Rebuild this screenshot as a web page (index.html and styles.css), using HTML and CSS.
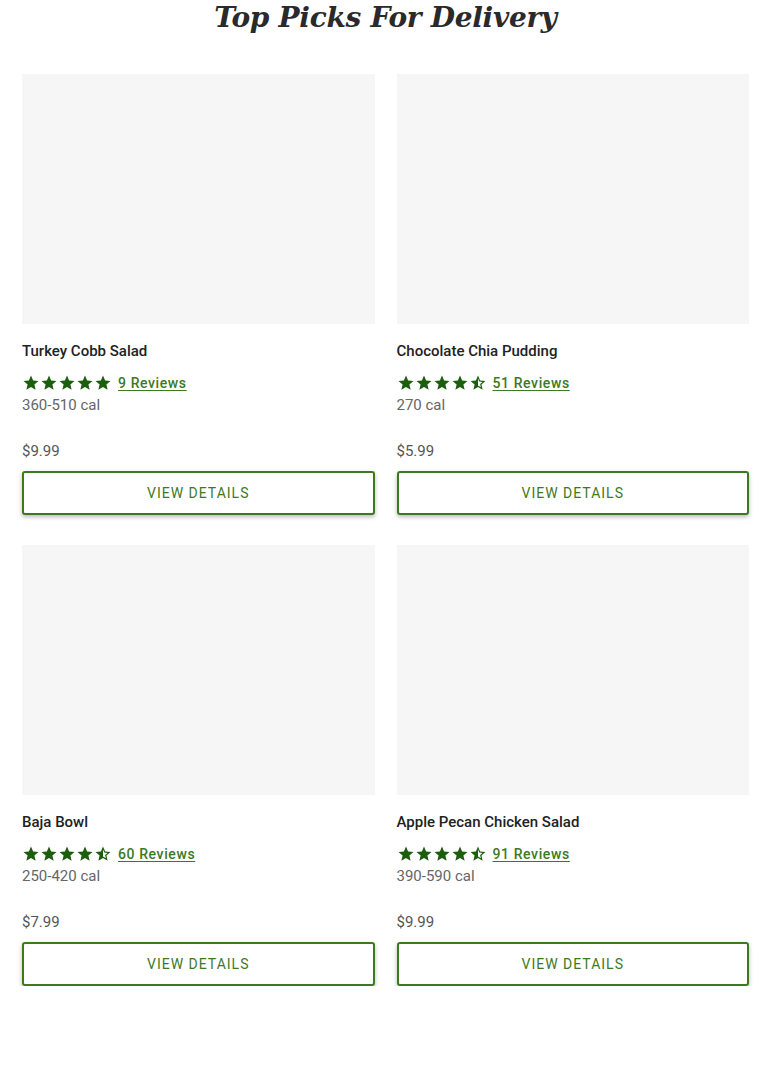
FILE: index.html
```html
<!DOCTYPE html>
<html>
<head>
<meta charset="utf-8">
<link rel="stylesheet" href="styles.css">
</head>
<body>
<svg width="0" height="0" class="defs">
  <defs>
    <symbol id="star" viewBox="0 0 24 24"><path d="M12 17.27L18.18 21l-1.64-7.03L22 9.24l-7.19-.61L12 2 9.19 8.63 2 9.24l5.46 4.73L5.82 21z"/></symbol>
    <symbol id="half" viewBox="0 0 24 24"><path d="M22 9.24l-7.19-.62L12 2 9.19 8.63 2 9.24l5.46 4.73L5.82 21 12 17.27 18.18 21l-1.63-7.03L22 9.24zM12 15.4V6.1l1.71 4.04 4.38.38-3.32 2.88 1 4.28L12 15.4z"/></symbol>
  </defs>
</svg>
<main class="page">
  <h2 class="heading">Top Picks For Delivery</h2>
  <div class="grid">
    <div class="card">
      <div class="img"></div>
      <div class="title">Turkey Cobb Salad</div>
      <div class="rating">
        <span class="stars"><svg><use href="#star"/></svg><svg><use href="#star"/></svg><svg><use href="#star"/></svg><svg><use href="#star"/></svg><svg><use href="#star"/></svg></span>
        <a class="reviews">9 Reviews</a>
      </div>
      <div class="cal">360-510 cal</div>
      <div class="price">$9.99</div>
      <button class="btn">VIEW DETAILS</button>
    </div>
    <div class="card">
      <div class="img"></div>
      <div class="title">Chocolate Chia Pudding</div>
      <div class="rating">
        <span class="stars"><svg><use href="#star"/></svg><svg><use href="#star"/></svg><svg><use href="#star"/></svg><svg><use href="#star"/></svg><svg><use href="#half"/></svg></span>
        <a class="reviews">51 Reviews</a>
      </div>
      <div class="cal">270 cal</div>
      <div class="price">$5.99</div>
      <button class="btn">VIEW DETAILS</button>
    </div>
    <div class="card">
      <div class="img"></div>
      <div class="title">Baja Bowl</div>
      <div class="rating">
        <span class="stars"><svg><use href="#star"/></svg><svg><use href="#star"/></svg><svg><use href="#star"/></svg><svg><use href="#star"/></svg><svg><use href="#half"/></svg></span>
        <a class="reviews">60 Reviews</a>
      </div>
      <div class="cal">250-420 cal</div>
      <div class="price">$7.99</div>
      <button class="btn">VIEW DETAILS</button>
    </div>
    <div class="card">
      <div class="img"></div>
      <div class="title">Apple Pecan Chicken Salad</div>
      <div class="rating">
        <span class="stars"><svg><use href="#star"/></svg><svg><use href="#star"/></svg><svg><use href="#star"/></svg><svg><use href="#star"/></svg><svg><use href="#half"/></svg></span>
        <a class="reviews">91 Reviews</a>
      </div>
      <div class="cal">390-590 cal</div>
      <div class="price">$9.99</div>
      <button class="btn">VIEW DETAILS</button>
    </div>
  </div>
</main>
</body>
</html>
```
FILE: styles.css
```css
html, body { margin: 0; padding: 0; background: #fff; }
body { font-family: Roboto, "Liberation Sans", Arial, sans-serif; color: #222; }
.defs { position: absolute; width: 0; height: 0; }
.page { padding: 0 22px 0 22px; }
.heading {
  margin: 0;
  height: 74px;
  line-height: 36px;
  text-align: center;
  font-family: "DejaVu Serif", "Liberation Serif", serif;
  font-style: italic;
  font-weight: bold;
  font-size: 28px;
  letter-spacing: -0.3px;
  color: #2a2a2a;
}
.grid {
  display: grid;
  grid-template-columns: 1fr 1fr;
  column-gap: 22px;
  row-gap: 30px;
}
.card { display: flex; flex-direction: column; }
.img { height: 250px; background: #f6f6f6; }
.title { margin-top: 17px; font-size: 15px; line-height: 20px; font-weight: 500; color: #222; }
.rating { margin-top: 11px; height: 22px; display: flex; align-items: center; gap: 6px; }
.stars { display: flex; }
.stars svg { width: 18px; height: 18px; fill: #1c5e0e; display: block; }
.reviews {
  font-size: 14px; font-weight: 500; letter-spacing: 0.6px;
  color: #3b7a1f; text-decoration: underline; text-underline-offset: 2px;
}
.cal { font-size: 15px; line-height: 20px; color: #666; margin-top: 1px; }
.price { font-size: 15px; line-height: 20px; color: #555; margin-top: 26px; }
.btn {
  margin-top: 10px; height: 44px; width: 100%;
  background: #fff; border: 2px solid #3d7a1f; border-radius: 3px;
  box-shadow: 0 2px 4px rgba(0,0,0,0.28);
  font-family: Roboto, "Liberation Sans", Arial, sans-serif;
  font-size: 14px; letter-spacing: 1px; color: #3d7a1f; font-weight: 400;
  padding: 0;
}
```
